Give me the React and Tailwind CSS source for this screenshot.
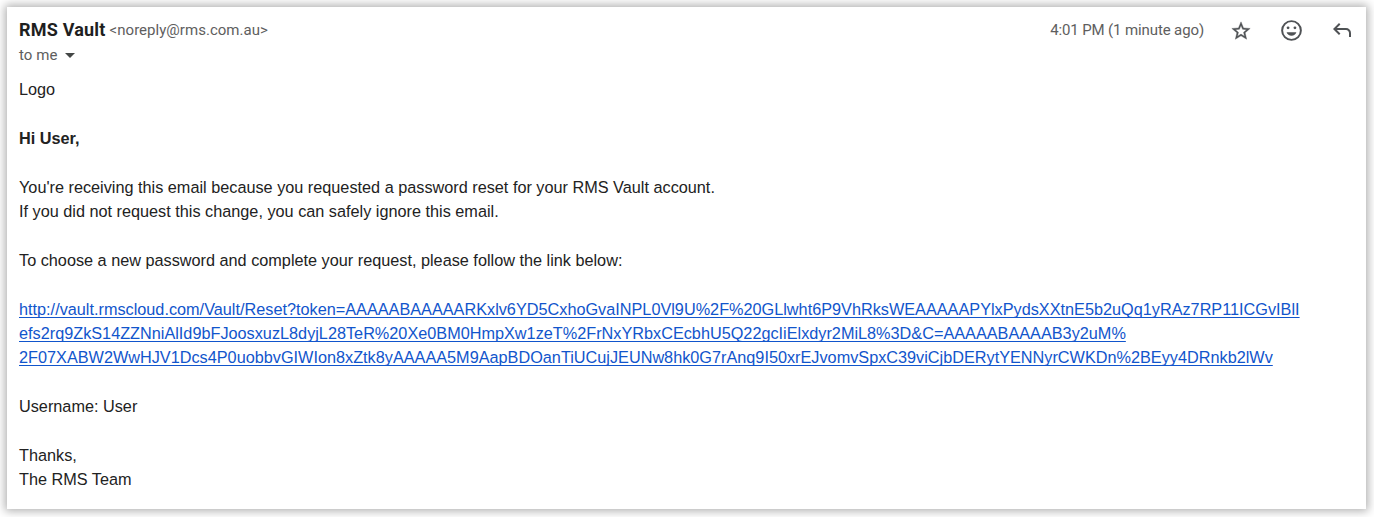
const linkLines = [
  "http://vault.rmscloud.com/Vault/Reset?token=AAAAABAAAAARKxlv6YD5CxhoGvaINPL0Vl9U%2F%20GLlwht6P9VhRksWEAAAAAPYlxPydsXXtnE5b2uQq1yRAz7RP11ICGvIBlI",
  "efs2rq9ZkS14ZZNniAlId9bFJoosxuzL8dyjL28TeR%20Xe0BM0HmpXw1zeT%2FrNxYRbxCEcbhU5Q22gcIiElxdyr2MiL8%3D&C=AAAAABAAAAB3y2uM%",
  "2F07XABW2WwHJV1Dcs4P0uobbvGIWIon8xZtk8yAAAAA5M9AapBDOanTiUCujJEUNw8hk0G7rAnq9I50xrEJvomvSpxC39viCjbDERytYENNyrCWKDn%2BEyy4DRnkb2lWv",
];

function StarIcon() {
  return (
    <svg viewBox="0 0 24 24" className="size-[22px]" fill="currentColor">
      <path
        stroke="currentColor"
        strokeWidth="0.4"
        d="M22 9.24l-7.19-.62L12 2 9.19 8.63 2 9.24l5.46 4.73L5.82 21 12 17.27 18.18 21l-1.63-7.03L22 9.24zM12 15.4l-3.76 2.27 1-4.28-3.32-2.88 4.38-.38L12 6.1l1.71 4.04 4.38.38-3.32 2.88 1 4.28L12 15.4z"
      />
    </svg>
  );
}

function SmileIcon() {
  return (
    <svg viewBox="0 0 24 24" className="size-[25px]" fill="currentColor">
      <circle cx="12" cy="12" r="9" fill="none" stroke="currentColor" strokeWidth="1.9" />
      <circle cx="8.7" cy="9.4" r="1.35" />
      <circle cx="15.3" cy="9.4" r="1.35" />
      <path d="M7.3 13.700h9.4c-.7 2-2.400 3.300-4.700 3.300S8 15.700 7.300 13.700z" />
    </svg>
  );
}

function ReplyIcon() {
  return (
    <svg viewBox="0 -960 960 960" className="size-[24px]" fill="currentColor">
      <path d="M760-200v-160q0-50-35-85t-85-35H273l144 144-57 56-240-240 240-240 57 56-144 144h367q83 0 141.500 58.500T840-360v160h-80Z" />
    </svg>
  );
}

export default function App() {
  return (
    <div className="h-[517px] overflow-hidden bg-white pt-[7px] pr-2 pb-2 pl-[7px]">
      <div className="h-[502px] bg-white pt-[10px] pl-3 shadow-[0_0_9px_2px_rgba(0,0,0,0.32)]">
        <div className="flex h-[26px] items-center justify-between pr-3 text-[#5e5e5e]">
          <div className="flex items-center whitespace-nowrap font-[Roboto,sans-serif]">
            <span className="text-[18px] leading-6 font-bold tracking-[0.2px] text-[#1f1f1f]">RMS Vault</span>
            <span className="ml-1 text-[15px] leading-6 tracking-[0.03px]">&lt;noreply@rms.com.au&gt;</span>
          </div>
          <div className="flex items-center">
            <span className="mr-[26px] whitespace-nowrap font-[Roboto,sans-serif] text-[15px] tracking-[-0.12px]">
              4:01 PM (1 minute ago)
            </span>
            <div className="flex items-center text-[#4f5255]">
              <div className="pt-px">
                <StarIcon />
              </div>
              <div className="ml-[27px]">
                <SmileIcon />
              </div>
              <div className="mb-px ml-[26px]">
                <ReplyIcon />
              </div>
            </div>
          </div>
        </div>

        <div className="flex h-6 items-center gap-[7px] font-[Roboto,sans-serif] text-[15px] tracking-[0.1px] text-[#5e5e5e]">
          <span>to me</span>
          <svg viewBox="0 0 10 5" className="h-[5px] w-[10px]" fill="#444746">
            <path d="M0 0h10L5 5z" />
          </svg>
        </div>

        <div className="mt-[10.25px] whitespace-nowrap font-['Liberation_Sans',Arial,sans-serif] text-[16.25px] leading-[24.375px] text-[#222222]">
          <p>Logo</p>
          <br />
          <p className="font-bold">Hi User,</p>
          <br />
          <p>You're receiving this email because you requested a password reset for your RMS Vault account.</p>
          <p>If you did not request this change, you can safely ignore this email.</p>
          <br />
          <p>To choose a new password and complete your request, please follow the link below:</p>
          <br />
          <a href="#" className="text-[#1155cc] underline decoration-1 underline-offset-2 [text-decoration-skip-ink:none]">
            {linkLines.map((line) => (
              <span key={line} className="block">{line}</span>
            ))}
          </a>
          <br />
          <p>Username: User</p>
          <br />
          <p>Thanks,</p>
          <p>The RMS Team</p>
        </div>
      </div>
    </div>
  );
}
